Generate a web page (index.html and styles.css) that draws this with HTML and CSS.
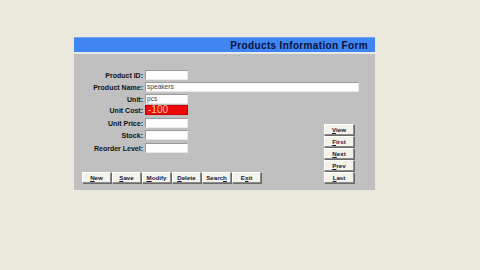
FILE: index.html
```html
<!DOCTYPE html>
<html>
<head>
<meta charset="utf-8">
<link rel="stylesheet" href="styles.css">
</head>
<body>
<div class="page">
  <div class="panel">
    <div class="header"><span class="title">Products Information Form</span></div>
    <div class="sep"></div>
    <div class="body">
      <div class="left">
        <div class="form">
          <div class="row"><span class="lbl">Product ID:</span><span class="inp"></span></div>
          <div class="row"><span class="lbl">Product Name:</span><span class="inp wide">speakers</span></div>
          <div class="row"><span class="lbl">Unit:</span><span class="inp">pcs</span></div>
          <div class="row r-cost"><span class="lbl">Unit Cost:</span><span class="inp red">-100</span></div>
          <div class="row r-price"><span class="lbl">Unit Price:</span><span class="inp"></span></div>
          <div class="row"><span class="lbl">Stock:</span><span class="inp"></span></div>
          <div class="row r-reorder"><span class="lbl">Reorder Level:</span><span class="inp"></span></div>
        </div>
        <div class="actions">
          <span class="btn"><u>N</u>ew</span>
          <span class="btn"><u>S</u>ave</span>
          <span class="btn"><u>M</u>odify</span>
          <span class="btn"><u>D</u>elete</span>
          <span class="btn">Searc<u>h</u></span>
          <span class="btn">E<u>x</u>it</span>
        </div>
      </div>
      <div class="nav">
        <span class="btn"><u>V</u>iew</span>
        <span class="btn"><u>F</u>irst</span>
        <span class="btn"><u>N</u>ext</span>
        <span class="btn"><u>P</u>rev</span>
        <span class="btn"><u>L</u>ast</span>
      </div>
    </div>
  </div>
</div>
</body>
</html>
```
FILE: styles.css
```css
html, body {
  margin: 0;
  padding: 0;
  background: #ebe9db;
  width: 480px;
  height: 270px;
  overflow: hidden;
  font-family: "Liberation Sans", Arial, sans-serif;
}
.page {
  padding: 37px 0 0 74px;
}
.panel {
  width: 301px;
}
.header {
  height: 15px;
  background: #3f86f2;
  border-top: 1px solid #6ea4f5;
  display: flex;
  align-items: center;
  justify-content: flex-end;
  padding-right: 7px;
  box-sizing: border-box;
}
.title {
  font-weight: bold;
  font-size: 10px;
  color: #0a0f3a;
  letter-spacing: 0.35px;
}
.sep {
  height: 2px;
  background: #e6e8ea;
}
.body {
  height: 136px;
  background: #c0c0c0;
  display: flex;
  box-sizing: border-box;
  padding-bottom: 7px;
}
.left {
  flex: 1;
  min-width: 0;
  display: flex;
  flex-direction: column;
  padding-top: 16px;
}
.form {
  display: flex;
  flex-direction: column;
  gap: 2px;
}
.row {
  display: flex;
  align-items: center;
  height: 10px;
  gap: 2px;
}
.r-cost { margin-top: -1px; }
.r-price { margin-top: 1px; }
.r-reorder { margin-top: 1px; }
.lbl {
  width: 69px;
  flex: none;
  text-align: right;
  font-weight: bold;
  font-size: 7px;
  color: #111;
  white-space: nowrap;
}
.inp {
  width: 43px;
  height: 10px;
  box-sizing: border-box;
  background: #fefefe;
  border: 1px solid #9a9a9a;
  border-right-color: #e8e8e8;
  border-bottom-color: #e8e8e8;
  font-size: 6.6px;
  line-height: 8px;
  color: #444;
  padding-left: 1px;
  flex: none;
}
.inp.wide {
  width: 214px;
}
.inp.red {
  background: #ee0a0a;
  border-color: #c00;
  color: #ffd0a0;
  font-size: 10px;
  line-height: 8px;
  padding-left: 2px;
}
.actions {
  margin-top: auto;
  margin-left: 8px;
  display: flex;
  gap: 1px;
}
.btn {
  width: 29px;
  height: 11px;
  box-sizing: border-box;
  background: #f4f3ea;
  border: 1px solid #8c8c8c;
  border-top-color: #ffffff;
  border-left-color: #ffffff;
  box-shadow: 1px 1px 0 #6a6a6a;
  font-weight: bold;
  font-size: 6.2px;
  line-height: 9px;
  text-align: center;
  color: #15153a;
}
.btn u {
  text-decoration: underline;
}
.nav {
  flex: none;
  align-self: flex-end;
  display: flex;
  flex-direction: column;
  gap: 1px;
  margin-right: 21px;
}
.nav .btn {
  width: 30px;
}
```
